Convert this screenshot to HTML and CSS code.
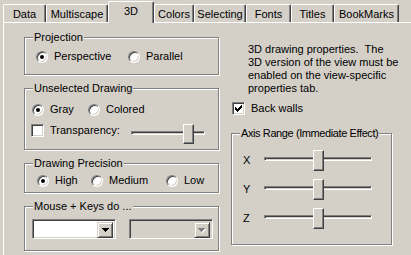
FILE: index.html
```html
<!DOCTYPE html>
<html lang="en">
<head>
  <meta charset="UTF-8">
  <title>View properties - 3D</title>
  <link rel="stylesheet" href="styles.css">
</head>
<body>
  <!-- Pestañas -->
  <div class="tabs">
    <div class="tab tab-data">Data</div>
    <div class="tab tab-multiscape">Multiscape</div>
    <div class="tab tab-3d selected">3D</div>
    <div class="tab tab-colors">Colors</div>
    <div class="tab tab-selecting">Selecting</div>
    <div class="tab tab-fonts">Fonts</div>
    <div class="tab tab-titles">Titles</div>
    <div class="tab tab-bookmarks">BookMarks</div>
  </div>

  <div class="panel">
    <!-- Columna izquierda -->
    <div class="column-left">
      <fieldset class="group group-projection">
        <legend>Projection</legend>
        <div class="group-body">
          <label class="option opt-perspective"><span class="radio checked"></span>Perspective</label>
          <label class="option"><span class="radio"></span>Parallel</label>
        </div>
      </fieldset>

      <fieldset class="group group-unselected">
        <legend>Unselected Drawing</legend>
        <div class="group-body">
          <label class="option opt-gray"><span class="radio checked"></span>Gray</label>
          <label class="option"><span class="radio"></span>Colored</label>
        </div>
        <div class="group-row">
          <label class="option opt-transparency"><span class="checkbox"></span>Transparency:</label>
          <div class="slider slider-small">
            <div class="track"></div>
            <div class="thumb" style="left: 52px"></div>
          </div>
        </div>
      </fieldset>

      <fieldset class="group group-precision">
        <legend>Drawing Precision</legend>
        <div class="group-body">
          <label class="option opt-high"><span class="radio checked"></span>High</label>
          <label class="option opt-medium"><span class="radio"></span>Medium</label>
          <label class="option"><span class="radio"></span>Low</label>
        </div>
      </fieldset>

      <fieldset class="group group-mouse">
        <legend>Mouse + Keys do ...</legend>
        <div class="group-body">
          <div class="combo">
            <div class="combo-button">
              <svg width="7" height="4" viewBox="0 0 7 4"><path d="M0 0h7v1h-1v1h-1v1h-1v1h-1v-1h-1v-1h-1v-1h-1z" fill="#000"/></svg>
            </div>
          </div>
          <div class="combo disabled">
            <div class="combo-button">
              <svg width="8" height="5" viewBox="0 0 8 5">
                <path d="M1 1h7v1h-1v1h-1v1h-1v1h-1v-1h-1v-1h-1v-1h-1z" fill="#fff"/>
                <path d="M0 0h7v1h-1v1h-1v1h-1v1h-1v-1h-1v-1h-1v-1h-1z" fill="#808080"/>
              </svg>
            </div>
          </div>
        </div>
      </fieldset>
    </div>

    <!-- Columna derecha -->
    <div class="column-right">
      <div class="description">
        3D drawing properties.&nbsp; The<br>
        3D version of the view must be<br>
        enabled on the view-specific<br>
        properties tab.
      </div>

      <label class="option check-row">
        <span class="checkbox">
          <svg width="7" height="7" viewBox="0 0 7 7"><path d="M6 0h1v1h-1zM5 1h2v1h-2zM0 2h1v1h-1zM4 2h3v1h-3zM0 3h2v1h-2zM3 3h3v1h-3zM0 4h5v1h-5zM1 5h3v1h-3zM2 6h1v1h-1z" fill="#000"/></svg>
        </span>
        Back walls
      </label>

      <fieldset class="group group-axis">
        <legend>Axis Range (Immediate Effect)</legend>
        <div class="axis-body">
          <div class="axis-row">
            <span class="axis-label">X</span>
            <div class="slider slider-axis">
              <div class="track"></div>
              <div class="thumb" style="left: 49px"></div>
            </div>
          </div>
          <div class="axis-row">
            <span class="axis-label">Y</span>
            <div class="slider slider-axis">
              <div class="track"></div>
              <div class="thumb" style="left: 49px"></div>
            </div>
          </div>
          <div class="axis-row">
            <span class="axis-label">Z</span>
            <div class="slider slider-axis">
              <div class="track"></div>
              <div class="thumb" style="left: 49px"></div>
            </div>
          </div>
        </div>
      </fieldset>
    </div>
  </div>
</body>
</html>
```

FILE: styles.css
```css
/* Fondo del diálogo */
body {
  margin: 0;
  background: #d4d0c8;
  font-family: "Liberation Sans", Arial, sans-serif;
  font-size: 11px;
  line-height: 13px;
  color: #000;
  overflow: hidden;
}

/* Pestañas */
.tabs {
  display: flex;
  align-items: flex-end;
  height: 22px;
  padding-left: 3px;
}
.tab {
  box-sizing: border-box;
  height: 18px;
  padding-top: 3px;
  text-align: center;
  white-space: nowrap;
  border: 1px solid #fff;
  border-bottom: none;
  border-right-color: #404040;
  border-radius: 2px 2px 0 0;
  box-shadow: inset -1px 0 #808080;
}
.tab.selected {
  height: 22px;
  margin-bottom: -1px;
  position: relative;
  z-index: 1;
  background: #d4d0c8;
}
.tab-data { width: 43px; }
.tab-multiscape { width: 62px; }
.tab-3d { width: 46px; }
.tab-colors { width: 40px; }
.tab-selecting { width: 52px; }
.tab-fonts { width: 45px; }
.tab-titles { width: 43px; }
.tab-bookmarks { width: 65px; }

/* Panel de la pestaña */
.panel {
  box-sizing: border-box;
  display: flex;
  align-items: flex-start;
  gap: 12px;
  height: 233px;
  margin-left: 3px;
  padding: 8px 0 0 20px;
  border-top: 1px solid #fff;
  border-left: 1px solid #fff;
}

.column-left {
  width: 195px;
  display: flex;
  flex-direction: column;
  gap: 7px;
}
.column-right {
  width: 162px;
}

/* Marcos agrupados */
.group {
  box-sizing: border-box;
  margin: 0;
  padding: 0;
  min-width: 0;
  border: 1px solid #808080;
  box-shadow: inset 1px 1px #fff, 1px 1px #fff;
}
.group legend {
  margin-left: 8px;
  padding: 0 1px;
  background: #d4d0c8;
}
.group-body {
  display: flex;
  align-items: center;
}
.group-projection { height: 44px; }
.group-projection .group-body { padding: 6px 0 0 11px; }
.group-unselected { height: 68px; }
.group-unselected .group-body { padding: 8px 0 0 7px; }
.group-row {
  display: flex;
  align-items: flex-start;
  margin-top: 8px;
  padding-left: 6px;
}
.group-precision { height: 36px; }
.group-precision .group-body { padding: 4px 0 0 12px; }
.group-mouse { height: 51px; }
.group-mouse .group-body {
  padding: 6px 0 0 7px;
  gap: 13px;
}
.group-axis {
  width: 161px;
  height: 118px;
  margin-top: 12px;
}
.group-axis legend {
  letter-spacing: -0.4px;
}

/* Opciones */
.option {
  display: flex;
  align-items: center;
  gap: 6px;
  white-space: nowrap;
}
.opt-perspective { width: 92px; }
.opt-gray { width: 56px; }
.opt-transparency { width: 100px; }
.opt-high { width: 54px; }
.opt-medium { width: 75px; }

.radio {
  box-sizing: border-box;
  width: 12px;
  height: 12px;
  border-radius: 50%;
  border: 1px solid;
  border-color: #808080 #fff #fff #808080;
  background: #fff;
  box-shadow: inset 1px 1px #404040, inset -1px -1px #d4d0c8;
  display: flex;
  align-items: center;
  justify-content: center;
}
.radio.checked::after {
  content: "";
  width: 4px;
  height: 4px;
  border-radius: 50%;
  background: #000;
}

.checkbox {
  box-sizing: border-box;
  width: 13px;
  height: 13px;
  border: 1px solid;
  border-color: #808080 #fff #fff #808080;
  background: #fff;
  box-shadow: inset 1px 1px #404040, inset -1px -1px #d4d0c8;
  display: flex;
  align-items: center;
  justify-content: center;
}
.checkbox svg {
  display: block;
}

/* Deslizadores */
.slider {
  position: relative;
}
.slider-small {
  width: 74px;
  height: 20px;
}
.slider-axis {
  width: 108px;
  height: 21px;
}
.track {
  position: absolute;
  left: 0;
  right: 0;
  top: 7px;
  height: 4px;
  box-sizing: border-box;
  border: 1px solid;
  border-color: #808080 #fff #fff #808080;
  background: #d4d0c8;
  box-shadow: inset 1px 1px #404040;
}
.thumb {
  position: absolute;
  top: 0;
  width: 11px;
  height: 100%;
  box-sizing: border-box;
  border: 1px solid;
  border-color: #fff #404040 #404040 #fff;
  background: #d4d0c8;
  box-shadow: inset -1px -1px #808080;
}

/* Listas desplegables */
.combo {
  box-sizing: border-box;
  width: 84px;
  height: 20px;
  padding: 2px;
  border: 1px solid;
  border-color: #808080 #fff #fff #808080;
  background: #fff;
  box-shadow: inset 1px 1px #404040, inset -1px -1px #d4d0c8;
  display: flex;
  justify-content: flex-end;
}
.combo.disabled {
  background: #d4d0c8;
}
.combo-button {
  box-sizing: border-box;
  width: 16px;
  height: 16px;
  border: 1px solid;
  border-color: #d4d0c8 #404040 #404040 #d4d0c8;
  background: #d4d0c8;
  box-shadow: inset 1px 1px #fff, inset -1px -1px #808080;
  display: flex;
  align-items: center;
  justify-content: center;
}
.combo-button svg {
  display: block;
}

/* Columna derecha */
.description {
  margin: 12px 0 0 17px;
  white-space: nowrap;
}
.check-row {
  margin: 7px 0 0 1px;
}
.axis-body {
  display: flex;
  flex-direction: column;
  gap: 8px;
  padding: 10px 0 0 11px;
}
.axis-row {
  display: flex;
  align-items: center;
}
.axis-label {
  width: 21px;
}
```
